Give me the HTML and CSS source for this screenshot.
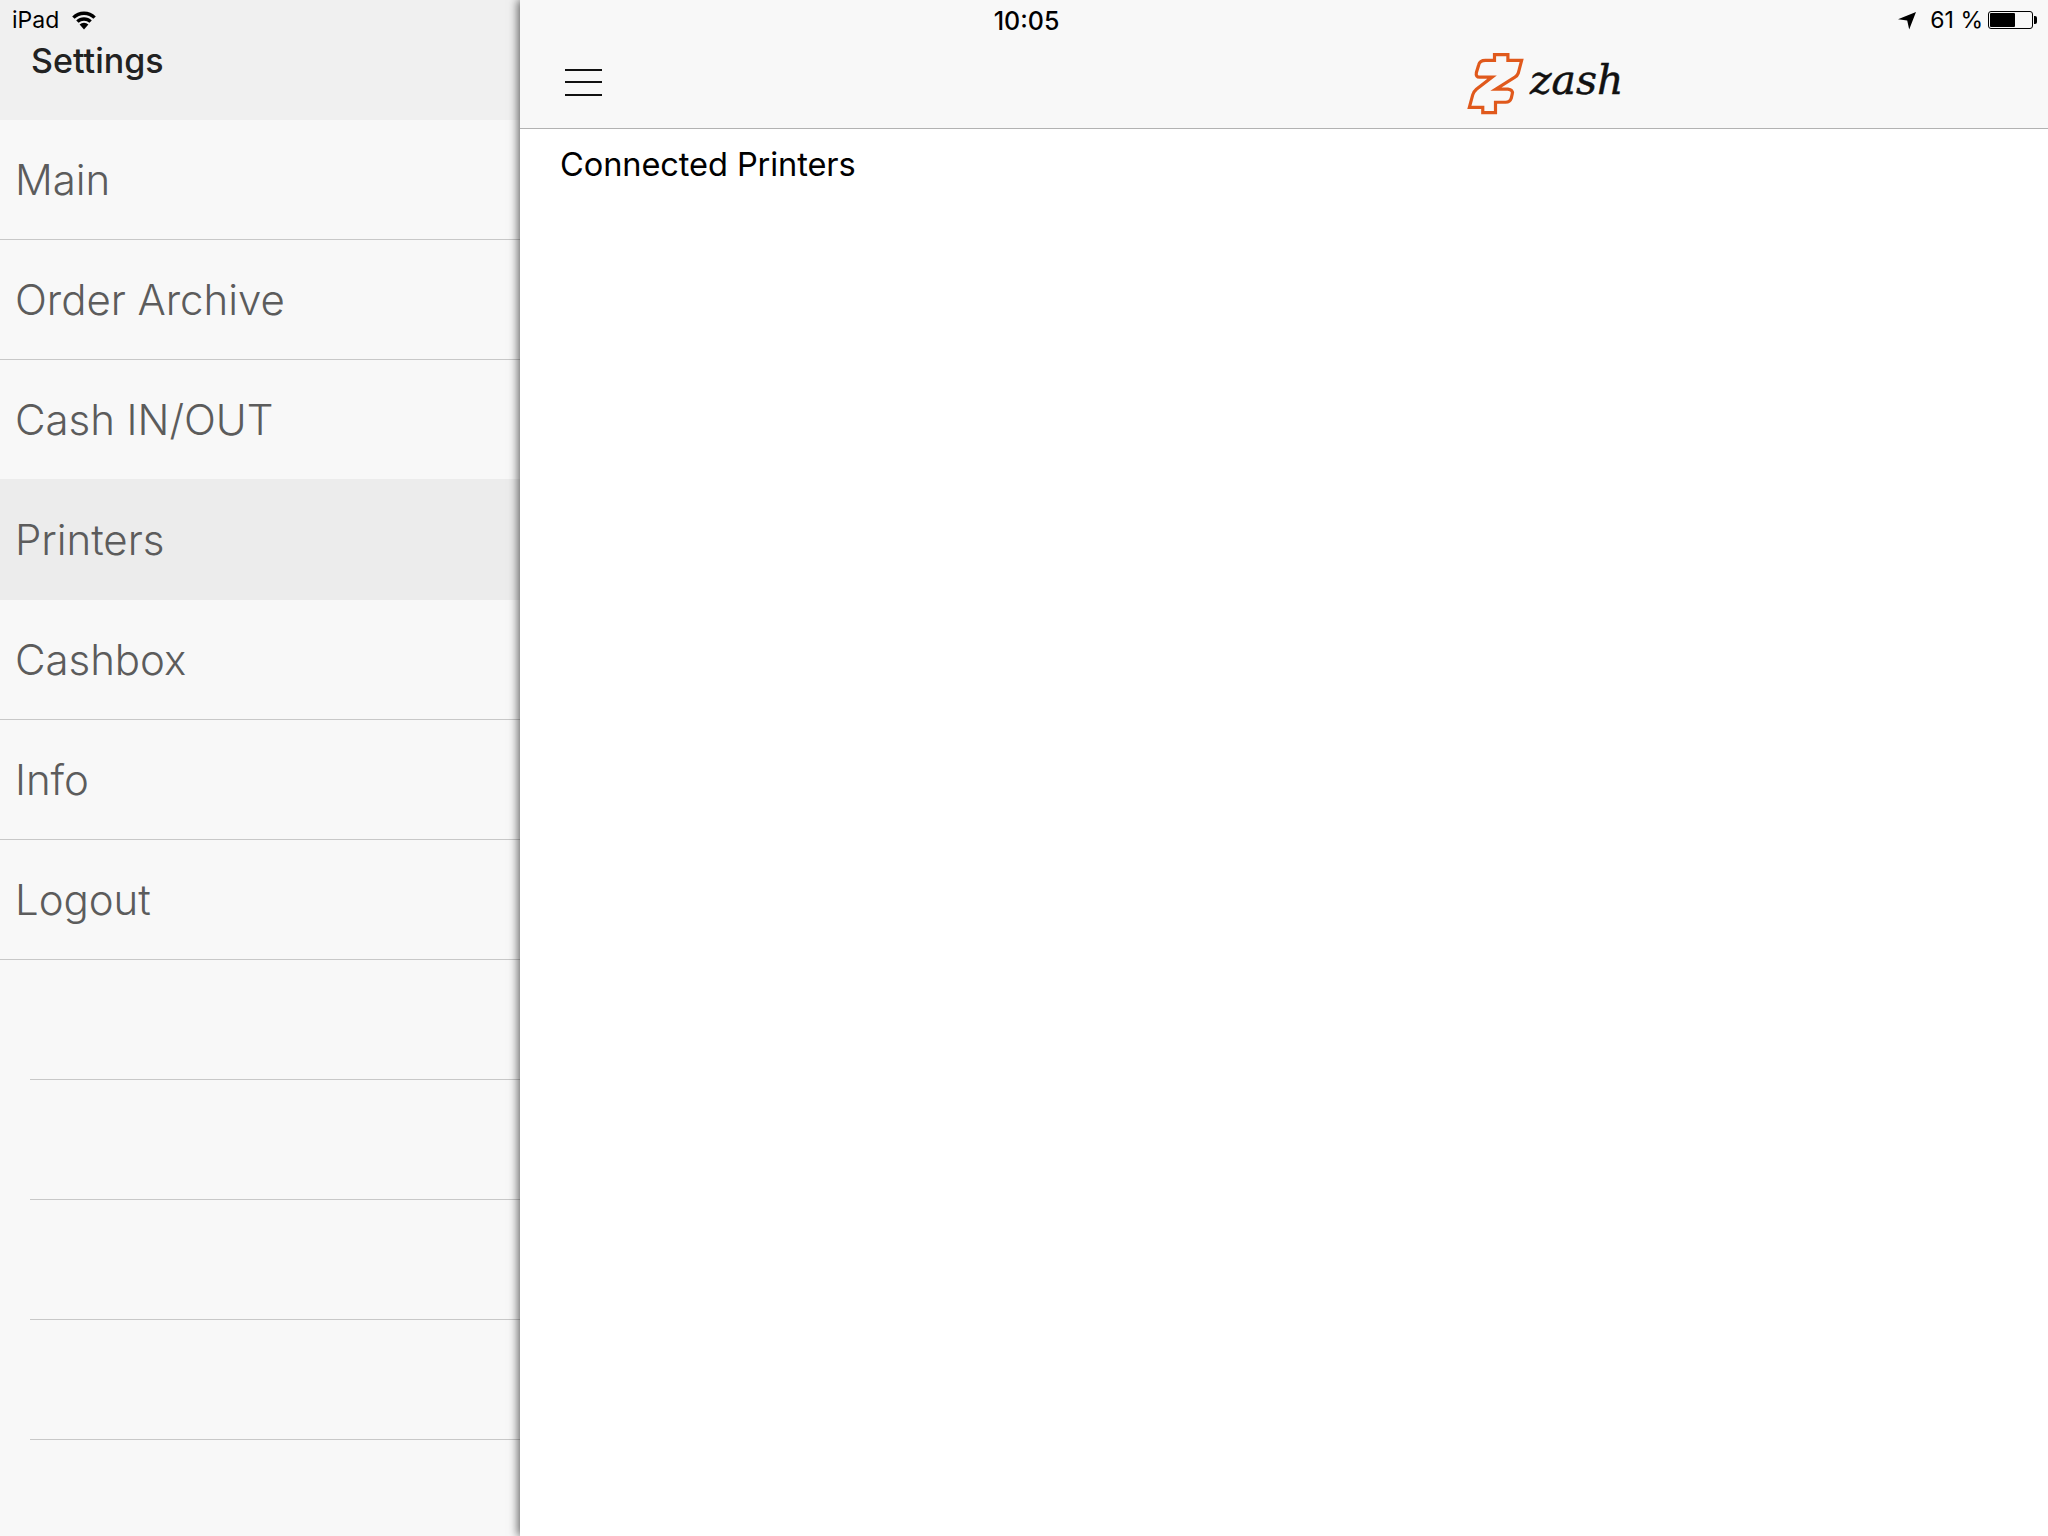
FILE: index.html
```html
<!DOCTYPE html>
<html>

<head>
    <title>Printers</title>
    <link rel="stylesheet" href="styles.css">
</head>

<body>
    <div class="status-bar">
        <div class="status-left">
            <span>iPad</span>
            <svg class="wifi-icon" width="24" height="19" viewBox="0 0 24 19">
                <path d="M1.4 6.6A15 15 0 0 1 22.6 6.6" fill="none" stroke="#000" stroke-width="3.4" />
                <path d="M5.4 10.6A9.5 9.5 0 0 1 18.6 10.6" fill="none" stroke="#000" stroke-width="3.4" />
                <path d="M12 18.5L7.6 13.6A6.2 6.2 0 0 1 16.4 13.6Z" />
            </svg>
        </div>
        <div class="status-time">10:05</div>
        <div class="status-right">
            <svg class="arrow-icon" width="20" height="19" viewBox="0 0 20 19">
                <path d="M19 1L1 8.2L10.2 9.4L12.2 18.4Z" />
            </svg>
            <span>61 %</span>
            <div class="battery">
                <div class="battery-level"></div>
            </div>
            <div class="battery-nub"></div>
        </div>
    </div>

    <div class="app">
        <div class="sidebar">
            <div class="sidebar-header">
                <h1 class="sidebar-title">Settings</h1>
            </div>
            <div class="menu-item">Main</div>
            <div class="menu-item">Order Archive</div>
            <div class="menu-item">Cash IN/OUT</div>
            <div class="menu-item active">Printers</div>
            <div class="menu-item">Cashbox</div>
            <div class="menu-item">Info</div>
            <div class="menu-item">Logout</div>
            <div class="empty-row"></div>
            <div class="empty-row"></div>
            <div class="empty-row"></div>
            <div class="empty-row"></div>
        </div>

        <div class="main">
            <div class="navbar">
                <div class="hamburger">
                    <span></span>
                    <span></span>
                    <span></span>
                </div>
                <div class="logo">
                    <svg width="57" height="62" viewBox="140 70 170 185">
                        <path class="logo-mark" d="M222 75H262V92H303L293 130Q290 138 283 142L226 178H262Q278 180 275 192L272 205Q268 217 255 217H225V248H187V232H147L157 195Q160 185 168 178L215 142H178Q165 142 168 128L175 105Q178 92 195 92H222Z" />
                    </svg>
                    <span class="logo-text">zash</span>
                </div>
            </div>
            <p class="page-title">Connected Printers</p>
        </div>
    </div>
</body>

</html>
```

FILE: styles.css
```css
html,
body {
    margin: 0;
    height: 100%;
    overflow: hidden;
}

body {
    font-family: Inter, "Noto Sans", sans-serif;
    background-color: #fff;
    color: #000;
}

.status-bar {
    position: absolute;
    top: 0;
    left: 0;
    width: 100%;
    height: 40px;
    display: grid;
    grid-template-columns: 1fr auto 1fr;
    align-items: center;
    font-size: 23px;
    z-index: 2;
}

.status-left {
    display: flex;
    align-items: center;
    padding-left: 12px;
    gap: 13px;
}

.status-time {
    padding: 1px 0 0 5px;
    font-size: 25px;
    font-weight: 500;
}

.status-right {
    display: flex;
    align-items: center;
    justify-content: flex-end;
    padding-right: 11px;
}

.arrow-icon {
    margin-right: 13px;
}

.battery {
    width: 45px;
    height: 18px;
    box-sizing: border-box;
    margin-left: 5px;
    padding: 1px;
    border: 1px solid #000;
    border-radius: 3px;
}

.battery-level {
    width: 62%;
    height: 100%;
    background-color: #000;
    border-radius: 1px;
}

.battery-nub {
    width: 3px;
    height: 8px;
    margin-left: 1px;
    background-color: #000;
    border-radius: 0 2px 2px 0;
}

.app {
    display: flex;
    height: 100vh;
}

.sidebar {
    width: 520px;
    flex-shrink: 0;
    background-color: #f8f8f8;
}

.sidebar-header {
    height: 120px;
    box-sizing: border-box;
    padding: 40px 0 0 31px;
    background-color: #f0f0f0;
}

.sidebar-title {
    margin: 0;
    font-size: 34px;
    font-weight: 500;
    line-height: 42px;
    color: #222;
}

.menu-item {
    height: 120px;
    box-sizing: border-box;
    display: flex;
    align-items: center;
    padding-left: 15px;
    font-size: 42px;
    font-weight: 300;
    letter-spacing: -0.05px;
    color: #5c5c5c;
    border-bottom: 1px solid #c8c8c8;
}

.menu-item.active {
    height: 121px;
    margin-top: -1px;
    background-color: #ececec;
    border-bottom-color: #ececec;
}

.empty-row {
    height: 120px;
    box-sizing: border-box;
    margin-left: 30px;
    border-bottom: 1px solid #c8c8c8;
}

.main {
    flex: 1;
    background-color: #fff;
    box-shadow: -2px 0 9px rgba(0, 0, 0, 0.6);
    z-index: 1;
}

.navbar {
    height: 129px;
    box-sizing: border-box;
    display: flex;
    align-items: center;
    padding: 40px 0 0 45px;
    background-color: #f8f8f8;
    border-bottom: 1px solid #b2b2b2;
}

.hamburger {
    width: 37px;
    display: flex;
    flex-direction: column;
    gap: 10.5px;
    margin-top: -4px;
}

.hamburger span {
    height: 2px;
    background-color: #111;
}

.logo {
    display: flex;
    align-items: center;
    margin-left: 865px;
}

.logo-mark {
    fill: none;
    stroke: #e0591c;
    stroke-width: 9.5;
}

.logo-text {
    margin: -9px 0 0 6px;
    font-family: "DejaVu Serif", serif;
    font-style: italic;
    font-size: 41px;
    color: #111;
    -webkit-text-stroke: 0.5px #111;
}

.page-title {
    margin: 14px 0 0 40px;
    font-size: 32.6px;
    letter-spacing: -0.1px;
    line-height: 42px;
}
```
